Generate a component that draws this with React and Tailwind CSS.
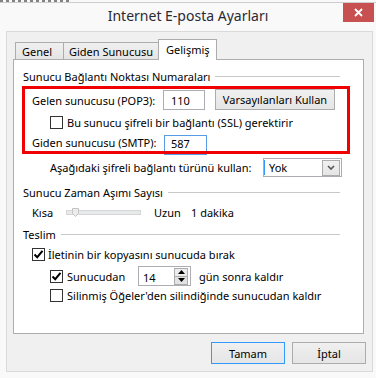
import React from 'react';

// Small checkbox in the Windows 8 style
function Check({ checked }) {
  return (
    <span className="w-[13px] h-[13px] shrink-0 border border-[#333] bg-white flex items-center justify-center">
      {checked && (
        <svg width="11" height="11" viewBox="0 0 11 11">
          <path d="M1.5 5.5 L4.2 8.2 L9.5 1.8" stroke="#000" strokeWidth="2" fill="none" />
        </svg>
      )}
    </span>
  );
}

// Group box title with a line running to the right
function GroupHeader({ children, className }) {
  return (
    <div className={`ml-[9px] w-[317px] h-[16px] flex items-center ${className}`}>
      <span className="whitespace-nowrap">{children}</span>
      <span className="flex-1 h-px bg-[#c8c8c8] ml-[5px]" />
    </div>
  );
}

const btn =
  'h-[22px] w-[74px] flex items-center justify-center border bg-gradient-to-b from-[#f0f0f0] to-[#e5e5e5]';

export default function App() {
  return (
    <div className="w-[376px] h-[378px] overflow-hidden bg-[#f9f9f9] text-[11px] leading-none text-black font-['Segoe_UI','Noto_Sans',sans-serif]">
      {/* edge of the window behind */}
      <div className="h-[2px] flex">
        <div className="w-[70px] h-[2px] bg-[repeating-linear-gradient(90deg,#333_0px,#333_3px,transparent_3px,transparent_6px)] opacity-60" />
      </div>
      <div className="h-px bg-[#cdcdcd]" />

      {/* title bar */}
      <div className="h-[28px] flex">
        <div className="w-[34px]" />
        <div className="flex-1 text-center text-[14px] leading-[20px] pt-[3px] text-[#2a2a33] whitespace-nowrap">
          Internet E-posta Ayarları
        </div>
        <div className="w-[34px] pl-[1px]">
          <div className="w-[31px] h-[19px] bg-[#c75050] flex items-center justify-center">
            <svg width="9" height="9" viewBox="0 0 9 9">
              <path d="M1 1 L8 8 M8 1 L1 8" stroke="#fff" strokeWidth="1.8" />
            </svg>
          </div>
        </div>
      </div>

      {/* dialog panel */}
      <div className="ml-[6px] w-[367px] h-[341px] border border-[#dadada] bg-[#f0f0f0]">
        {/* tabs */}
        <div className="mt-[7px] h-[20px] pl-[8px] flex items-end">
          <div className="w-[48px] h-[17px] border-l border-t border-[#acacac] bg-gradient-to-b from-[#f0f0f0] to-[#e5e5e5] pl-[6px] pt-[1px] flex items-center">
            Genel
          </div>
          <div className="w-[95px] h-[17px] border-l border-t border-[#acacac] bg-gradient-to-b from-[#f0f0f0] to-[#e5e5e5] pl-[5px] pt-[1px] flex items-center whitespace-nowrap">
            Giden Sunucusu
          </div>
          <div className="relative z-10 -mb-px w-[59px] h-[21px] border-l border-t border-r border-[#acacac] bg-white pl-[7px] pb-[2px] flex items-center">
            Gelişmiş
          </div>
        </div>

        {/* tab content */}
        <div className="ml-[6px] w-[351px] h-[275px] border border-[#adadad] bg-white">
          <GroupHeader className="mt-[8px]">Sunucu Bağlantı Noktası Numaraları</GroupHeader>

          <div className="relative mt-[5px]">
            <div className="h-[21px] flex items-center">
              <span className="ml-[18px] w-[131px] pt-[2px] whitespace-nowrap">Gelen sunucusu (POP3):</span>
              <div className="w-[42px] h-[20px] border border-[#abadb3] pl-[7px] pt-[2px] flex items-center">110</div>
              <div className="ml-[10px] w-[120px] h-[21px] border border-[#acacac] bg-gradient-to-b from-[#f0f0f0] to-[#e5e5e5] flex items-center justify-center whitespace-nowrap">
                Varsayılanları Kullan
              </div>
            </div>
            <div className="mt-[3px] h-[18px] flex items-center">
              <span className="ml-[36px]">
                <Check />
              </span>
              <span className="ml-[4px] whitespace-nowrap">Bu sunucu şifreli bir bağlantı (SSL) gerektirir</span>
            </div>
            <div className="mt-[4px] h-[20px] flex items-start">
              <span className="ml-[18px] w-[132px] leading-[15px] whitespace-nowrap">Giden sunucusu (SMTP):</span>
              <div className="w-[43px] h-[20px] border border-[#569de5] pl-[6px] leading-[15px]">587</div>
            </div>
            {/* red annotation frame */}
            <div className="absolute left-[8px] -top-[3px] w-[328px] h-[68px] border-[3px] border-[#f00000]" />
          </div>

          <div className="mt-[3px] h-[19px] flex items-center">
            <span className="ml-[36px] w-[213px] whitespace-nowrap">Aşağıdaki şifreli bağlantı türünü kullan:</span>
            <div className="w-[79px] h-[19px] border border-[#abadb3] flex items-center">
              <span className="flex-1 pl-[4px] border-l border-[#3399ff] h-[15px] flex items-center">Yok</span>
              <span className="mr-[1px] w-[18px] h-[16px] border border-[#acacac] bg-gradient-to-b from-[#f0f0f0] to-[#e5e5e5] flex items-center justify-center">
                <svg width="8" height="5" viewBox="0 0 8 5">
                  <path d="M1 1 L4 4 L7 1" stroke="#555" strokeWidth="1.6" fill="none" />
                </svg>
              </span>
            </div>
          </div>

          <GroupHeader className="mt-[7px]">Sunucu Zaman Aşımı Sayısı</GroupHeader>

          <div className="mt-[4px] h-[16px] flex items-center">
            <span className="ml-[18px] w-[34px]">Kısa</span>
            <div className="relative w-[75px] h-[5px] border border-[#d6d6d6] bg-[#e7eaea]">
              <svg className="absolute left-[5px] -top-[3px]" width="7" height="9" viewBox="0 0 7 9">
                <path d="M0.5 0.5 H6.5 V5.5 L3.5 8.5 L0.5 5.5 Z" fill="#ececec" stroke="#c4c4c4" />
              </svg>
            </div>
            <span className="ml-[13px] w-[37px]">Uzun</span>
            <span>1 dakika</span>
          </div>

          <GroupHeader className="mt-[6px]">Teslim</GroupHeader>

          <div className="mt-[5px] h-[15px] flex items-center">
            <span className="ml-[18px]">
              <Check checked />
            </span>
            <span className="ml-[3px] whitespace-nowrap">İletinin bir kopyasını sunucuda bırak</span>
          </div>

          <div className="mt-[4px] h-[20px] flex items-center">
            <span className="ml-[36px]">
              <Check checked />
            </span>
            <span className="ml-[4px] w-[71px]">Sunucudan</span>
            <div className="w-[53px] h-[20px] border border-[#abadb3] flex items-center">
              <span className="flex-1 pl-[4px] pt-[2px]">14</span>
              <div className="mr-[2px] w-[14px] h-[17px] flex flex-col">
                <span className="h-[9px] border border-[#acacac] bg-[#ececec] flex items-center justify-center">
                  <svg width="7" height="4" viewBox="0 0 7 4"><path d="M0 4 L3.5 0 L7 4 Z" fill="#000" /></svg>
                </span>
                <span className="-mt-px h-[9px] border border-[#acacac] bg-[#e2e2e2] flex items-center justify-center">
                  <svg width="7" height="4" viewBox="0 0 7 4"><path d="M0 0 L3.5 4 L7 0 Z" fill="#000" /></svg>
                </span>
              </div>
            </div>
            <span className="ml-[8px] whitespace-nowrap">gün sonra kaldır</span>
          </div>

          <div className="mt-[2px] h-[15px] flex items-center">
            <span className="ml-[36px]">
              <Check />
            </span>
            <span className="ml-[4px] whitespace-nowrap">Silinmiş Öğeler'den silindiğinde sunucudan kaldır</span>
          </div>
        </div>

        {/* dialog buttons */}
        <div className="mt-[8px] pr-[6px] flex justify-end gap-[7px]">
          <div className={`${btn} border-[#3399ff]`}>Tamam</div>
          <div className={`${btn} border-[#acacac]`}>İptal</div>
        </div>
      </div>
    </div>
  );
}
